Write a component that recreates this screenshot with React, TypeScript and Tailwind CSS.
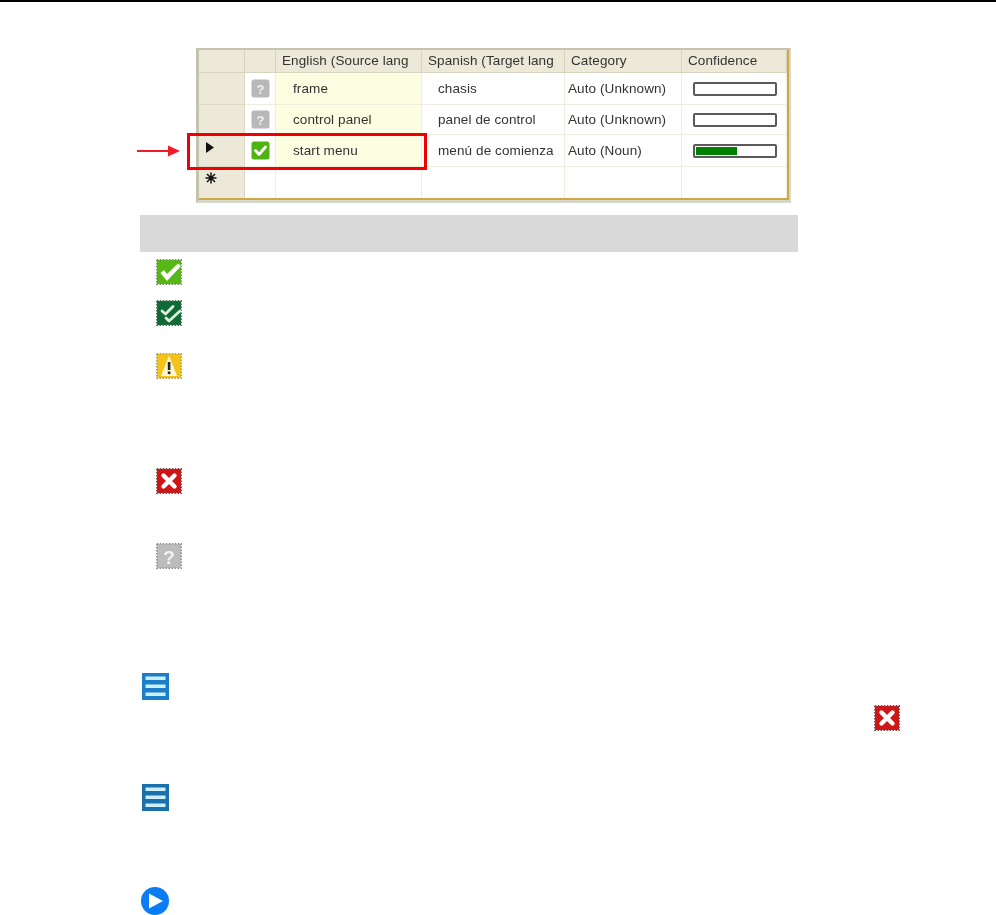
import React from 'react';

const rows = [
  { source: 'frame', target: 'chasis', category: 'Auto (Unknown)', confidence: 0, status: 'unknown' },
  { source: 'control panel', target: 'panel de control', category: 'Auto (Unknown)', confidence: 0, status: 'unknown' },
  { source: 'start menu', target: 'menú de comienza', category: 'Auto (Noun)', confidence: 52, status: 'ok' },
];

const rowHeights = ['h-[32px]', 'h-[30px]', 'h-[32px]'];

// stamp shaped status icons, the dotted edge is a dashed rect
const Stamp = ({ fill, edge, children, className }: { fill: string; edge: string; children: React.ReactNode; className?: string }) => (
  <svg width="26" height="26" viewBox="0 0 26 26" className={`block shrink-0 ${className ?? ''}`}>
    <rect x="1" y="1" width="24" height="24" fill={fill} />
    <rect x="0.8" y="0.8" width="24.4" height="24.4" fill="none" stroke={edge} strokeWidth="1.5" strokeDasharray="1.5 1.5" />
    {children}
  </svg>
);

const OkIcon = ({ className }: { className?: string }) => (
  <Stamp fill="#56b814" edge="#6f8f5f" className={className}>
    <path d="M4.5 14 L8 11 L11 15 L22 4.5 L25 7 L11 22 Z" fill="#ffffff" />
  </Stamp>
);

const DoubleOkIcon = ({ className }: { className?: string }) => (
  <Stamp fill="#0f6a35" edge="#4d6d58" className={className}>
    <path d="M6 11 L9.5 14 L17 6.5" fill="none" stroke="#dcefe0" strokeWidth="2.8" strokeLinecap="round" strokeLinejoin="round" />
    <path d="M10 18 L13 21 L24 11" fill="none" stroke="#dcefe0" strokeWidth="2.8" strokeLinecap="round" strokeLinejoin="round" />
  </Stamp>
);

const WarnIcon = ({ className }: { className?: string }) => (
  <Stamp fill="#f5c21a" edge="#a99a5c" className={className}>
    <path d="M13 2.5 L21 23 L5 23 Z" fill="#fdf6d2" />
    <rect x="11.8" y="9" width="2.6" height="8" fill="#222222" />
    <rect x="11.8" y="18.5" width="2.6" height="2.6" fill="#222222" />
  </Stamp>
);

const ErrorIcon = ({ className }: { className?: string }) => (
  <Stamp fill="#cf1515" edge="#7a4a4a" className={className}>
    <path d="M7.5 7.5 L18.5 18.5 M18.5 7.5 L7.5 18.5" stroke="#ffffff" strokeWidth="4.4" strokeLinecap="round" />
  </Stamp>
);

const UnknownIcon = ({ className }: { className?: string }) => (
  <Stamp fill="#bcbcbc" edge="#8a8a8a" className={className}>
    <text x="13" y="20.5" textAnchor="middle" fontSize="19" fontWeight="700" fontFamily="Liberation Sans, sans-serif" fill="#f2f2f2">?</text>
  </Stamp>
);

const ListIcon = ({ fill, className }: { fill: string; className?: string }) => (
  <svg width="27" height="27" viewBox="0 0 27 27" className={`block shrink-0 ${className ?? ''}`}>
    <rect x="0" y="0" width="27" height="27" fill={fill} />
    <rect x="3.5" y="3.5" width="20" height="3.5" fill="#cbeefb" />
    <rect x="3.5" y="11.5" width="20" height="3.5" fill="#cbeefb" />
    <rect x="3.5" y="19.5" width="20" height="3.5" fill="#cbeefb" />
  </svg>
);

const GridStatus = ({ status }: { status: string }) => (
  <svg width="19" height="19" viewBox="0 0 19 19" className="block">
    <rect x="0.5" y="0.5" width="18" height="18" rx="2.5" fill={status === 'ok' ? '#4fb312' : '#b8b8b8'} />
    {status === 'ok' ? (
      <path d="M4.5 9.5 L8 13.5 L14.5 6" fill="none" stroke="#ffffff" strokeWidth="2.8" strokeLinecap="round" strokeLinejoin="round" />
    ) : (
      <text x="9.5" y="14.5" textAnchor="middle" fontSize="13" fontWeight="700" fontFamily="Liberation Sans, sans-serif" fill="#f2f2f2">?</text>
    )}
  </svg>
);

const headerCell = 'h-[23px] flex items-center px-[6px] bg-[#ece9d8] border-r border-b border-r-[#d8d4c0] border-b-[#d8d4c0] whitespace-nowrap overflow-hidden';
const cell = 'flex items-center border-r border-b border-[#f0eddf] whitespace-nowrap';

const TerminologyGrid = () => (
  <div className="w-[595px] h-[155px] bg-white border-t-2 border-l-[3px] border-r-2 border-b-[3px] border-t-[#c6c2b0] border-l-[#c6c2b0] border-r-[#d6d8ce] border-b-[#d6d8ce]">
    <div className="h-full border-r-2 border-b-2 border-[#d0a840]">
      <div className="grid grid-cols-[46px_31px_146px_143px_117px_105px] text-[13.5px] leading-none tracking-[0.1px] text-[#333333]">
        <div className={headerCell} />
        <div className={headerCell} />
        <div className={headerCell}>English (Source lang</div>
        <div className={headerCell}>Spanish (Target lang</div>
        <div className={headerCell}>Category</div>
        <div className={headerCell}>Confidence</div>

        {rows.map((row, i) => (
          <React.Fragment key={row.source}>
            <div className={`${rowHeights[i]} bg-[#ece9d8] border-r border-b border-[#dcd8c6] pl-[7px] pt-[7px]`}>
              {row.status === 'ok' && (
                <svg width="8" height="11" viewBox="0 0 8 11" className="block">
                  <path d="M0 0 L8 5.5 L0 11 Z" fill="#111111" />
                </svg>
              )}
            </div>
            <div className={`${cell} justify-center`}>
              <GridStatus status={row.status} />
            </div>
            <div className={`${cell} bg-[#fdfde2] pl-[17px]`}>{row.source}</div>
            <div className={`${cell} pl-[16px]`}>{row.target}</div>
            <div className={`${cell} pl-[3px]`}>{row.category}</div>
            <div className={`${cell} pl-[11px]`}>
              <div className="w-[84px] h-[14px] border-2 border-[#5a5a5a] rounded-[2px] bg-white p-px">
                <div className="h-full bg-[#008000]" style={{ width: `${row.confidence}%` }} />
              </div>
            </div>
          </React.Fragment>
        ))}

        <div className="h-[31px] bg-[#ece9d8] border-r border-[#dcd8c6] pl-[6px] pt-[5px]">
          <svg width="12" height="12" viewBox="0 0 12 12" className="block">
            <path d="M6 0.5 V11.5 M0.5 6 H11.5 M2 2 L10 10 M10 2 L2 10" stroke="#111111" strokeWidth="1.5" />
          </svg>
        </div>
        <div className="border-r border-[#f0eddf]" />
        <div className="border-r border-[#f0eddf]" />
        <div className="border-r border-[#f0eddf]" />
        <div className="border-r border-[#f0eddf]" />
        <div className="border-r border-[#f0eddf]" />
      </div>
    </div>
  </div>
);

export default function App() {
  return (
    <div className="h-[915px] overflow-hidden bg-white font-['Liberation_Sans',Arial,sans-serif]">
      <div className="h-[2px] bg-black" />

      <div className="relative ml-[196px] mt-[46px] w-[595px] blur-[0.45px]">
        <TerminologyGrid />
        {/* callout over the selected row */}
        <div className="absolute left-[-9px] top-[85px] w-[240px] h-[37px] border-[3px] border-[#f00000]" />
        <svg width="44" height="12" viewBox="0 0 44 12" className="absolute left-[-59px] top-[97px]">
          <path d="M0 6 H34" stroke="#ee1c25" strokeWidth="2" />
          <path d="M31 0.5 L43 6 L31 11.5 Z" fill="#ee1c25" />
        </svg>
      </div>

      <div className="ml-[140px] mt-[12px] w-[658px] h-[37px] bg-[#d9d9d9]" />

      <div className="flex flex-col blur-[0.6px]">
        <OkIcon className="ml-[156px] mt-[7px]" />
        <DoubleOkIcon className="ml-[156px] mt-[15px]" />
        <WarnIcon className="ml-[156px] mt-[27px]" />
        <ErrorIcon className="ml-[156px] mt-[89px]" />
        <UnknownIcon className="ml-[156px] mt-[49px]" />
        <ListIcon fill="#1c7ec8" className="ml-[142px] mt-[104px]" />
        <ErrorIcon className="ml-[874px] mt-[5px]" />
        <ListIcon fill="#1a70aa" className="ml-[142px] mt-[53px]" />
        <svg width="28" height="28" viewBox="0 0 28 28" className="block shrink-0 ml-[141px] mt-[76px]">
          <circle cx="14" cy="14" r="14" fill="#0a7cf5" />
          <path d="M8 6.5 L22 14 L8 21.5 Z" fill="#ffffff" />
        </svg>
      </div>
    </div>
  );
}
